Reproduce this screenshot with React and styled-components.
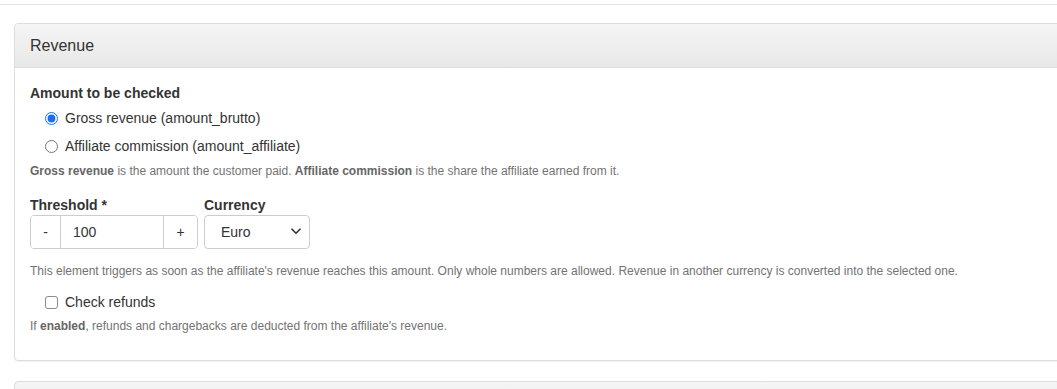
import React from "react";
import styled, { createGlobalStyle } from "styled-components";

const Global = createGlobalStyle`
  html, body { margin: 0; padding: 0; background: #fff; overflow: hidden; }
  body { font-family: "Liberation Sans", Arial, sans-serif; font-size: 14px; color: #333; }
  * { box-sizing: border-box; }
`;

const TopRule = styled.div`
  height: 5px;
  border-bottom: 1px solid #e3e3e3;
`;

const Page = styled.div`
  padding: 18px 0 0 14px;
  width: calc(100% + 40px);
`;

const Panel = styled.section`
  border: 1px solid #ddd;
  border-radius: 4px;
  background: #fff;
  box-shadow: 0 1px 1px rgba(0, 0, 0, 0.05);
  margin-bottom: 20px;
  overflow: hidden;
`;

const PanelHeading = styled.div`
  height: 44px;
  display: flex;
  align-items: center;
  padding: 0 15px;
  background: linear-gradient(to bottom, #f5f5f5 0%, #e8e8e8 100%);
  border-bottom: 1px solid #ddd;
`;

const PanelTitle = styled.h3`
  margin: 0;
  font-size: 16px;
  font-weight: normal;
  color: #333;
  line-height: 20px;
`;

const PanelBody = styled.div`
  padding: 15px 15px 15px;
`;

const Label = styled.div`
  font-weight: bold;
  font-size: 14px;
  line-height: 20px;
  color: #333;
`;

const ChoiceRow = styled.label`
  display: flex;
  align-items: center;
  gap: 7px;
  padding-left: 15px;
  margin-top: ${(p) => p.$mt || 0}px;
  line-height: 20px;
  font-size: 14px;
  color: #333;
  cursor: pointer;
`;

const Radio = styled.input.attrs({ type: "radio" })`
  width: 13px;
  height: 13px;
  margin: 0;
  accent-color: #1a6ff0;
`;

const Checkbox = styled.input.attrs({ type: "checkbox" })`
  appearance: none;
  width: 13px;
  height: 13px;
  margin: 0;
  border: 1px solid #8a8a8a;
  border-radius: 3px;
  background: #fff;
`;

const Help = styled.p`
  margin: ${(p) => p.$mt || 0}px 0 ${(p) => p.$mb || 0}px;
  font-size: 12px;
  line-height: 17px;
  color: #737373;
  b { color: #666; }
`;

const FieldRow = styled.div`
  display: flex;
  gap: 6px;
  margin-top: 15px;
`;

const Field = styled.div`
  display: flex;
  flex-direction: column;
`;

const InputGroup = styled.div`
  display: flex;
  height: 34px;
  width: 168px;
  border: 1px solid #ccc;
  border-radius: 4px;
  overflow: hidden;
`;

const StepButton = styled.button`
  width: ${(p) => p.$w}px;
  border: none;
  ${(p) => (p.$side === "left" ? "border-right: 1px solid #ccc;" : "border-left: 1px solid #ccc;")}
  background: #fff;
  font-family: inherit;
  font-size: 14px;
  color: #333;
  padding: 0;
`;

const NumberInput = styled.input`
  flex: 1;
  min-width: 0;
  border: none;
  padding: 0 12px;
  font-family: inherit;
  font-size: 14px;
  color: #333;
  outline: none;
`;

const SelectWrap = styled.div`
  position: relative;
  width: 106px;
  height: 34px;
`;

const Select = styled.select`
  appearance: none;
  width: 100%;
  height: 100%;
  border: 1px solid #ccc;
  border-radius: 4px;
  background: #fff;
  padding: 0 0 0 16px;
  font-family: inherit;
  font-size: 14px;
  color: #333;
`;

const Chevron = styled.svg`
  position: absolute;
  right: 9px;
  top: 13px;
  pointer-events: none;
`;

const NextPanel = styled.div`
  height: 40px;
  border: 1px solid #ddd;
  border-radius: 4px;
  background: linear-gradient(to bottom, #f5f5f5 0%, #e8e8e8 100%);
`;

export default function App() {
  return (
    <>
      <Global />
      <TopRule />
      <Page>
        <Panel>
          <PanelHeading>
            <PanelTitle>Revenue</PanelTitle>
          </PanelHeading>
          <PanelBody>
            <Label>Amount to be checked</Label>
            <ChoiceRow $mt={5}>
              <Radio name="amount" defaultChecked />
              Gross revenue (amount_brutto)
            </ChoiceRow>
            <ChoiceRow $mt={8}>
              <Radio name="amount" />
              Affiliate commission (amount_affiliate)
            </ChoiceRow>
            <Help $mt={7}>
              <b>Gross revenue</b> is the amount the customer paid. <b>Affiliate commission</b> is the share the affiliate earned from it.
            </Help>
            <FieldRow>
              <Field>
                <Label>Threshold *</Label>
                <InputGroup>
                  <StepButton $w={30} $side="left">-</StepButton>
                  <NumberInput defaultValue="100" />
                  <StepButton $w={34} $side="right">+</StepButton>
                </InputGroup>
              </Field>
              <Field>
                <Label>Currency</Label>
                <SelectWrap>
                  <Select defaultValue="EUR">
                    <option value="EUR">Euro</option>
                    <option value="USD">US Dollar</option>
                  </Select>
                  <Chevron width="10" height="7" viewBox="0 0 10 7">
                    <path d="M1 1.2 L5 5.2 L9 1.2" fill="none" stroke="#333" strokeWidth="1.6" strokeLinecap="round" strokeLinejoin="round" />
                  </Chevron>
                </SelectWrap>
              </Field>
            </FieldRow>
            <Help $mt={14}>
              This element triggers as soon as the affiliate's revenue reaches this amount. Only whole numbers are allowed. Revenue in another currency is converted into the selected one.
            </Help>
            <ChoiceRow $mt={12}>
              <Checkbox />
              Check refunds
            </ChoiceRow>
            <Help $mt={6} $mb={10}>
              If <b>enabled</b>, refunds and chargebacks are deducted from the affiliate's revenue.
            </Help>
          </PanelBody>
        </Panel>
        <NextPanel />
      </Page>
    </>
  );
}
